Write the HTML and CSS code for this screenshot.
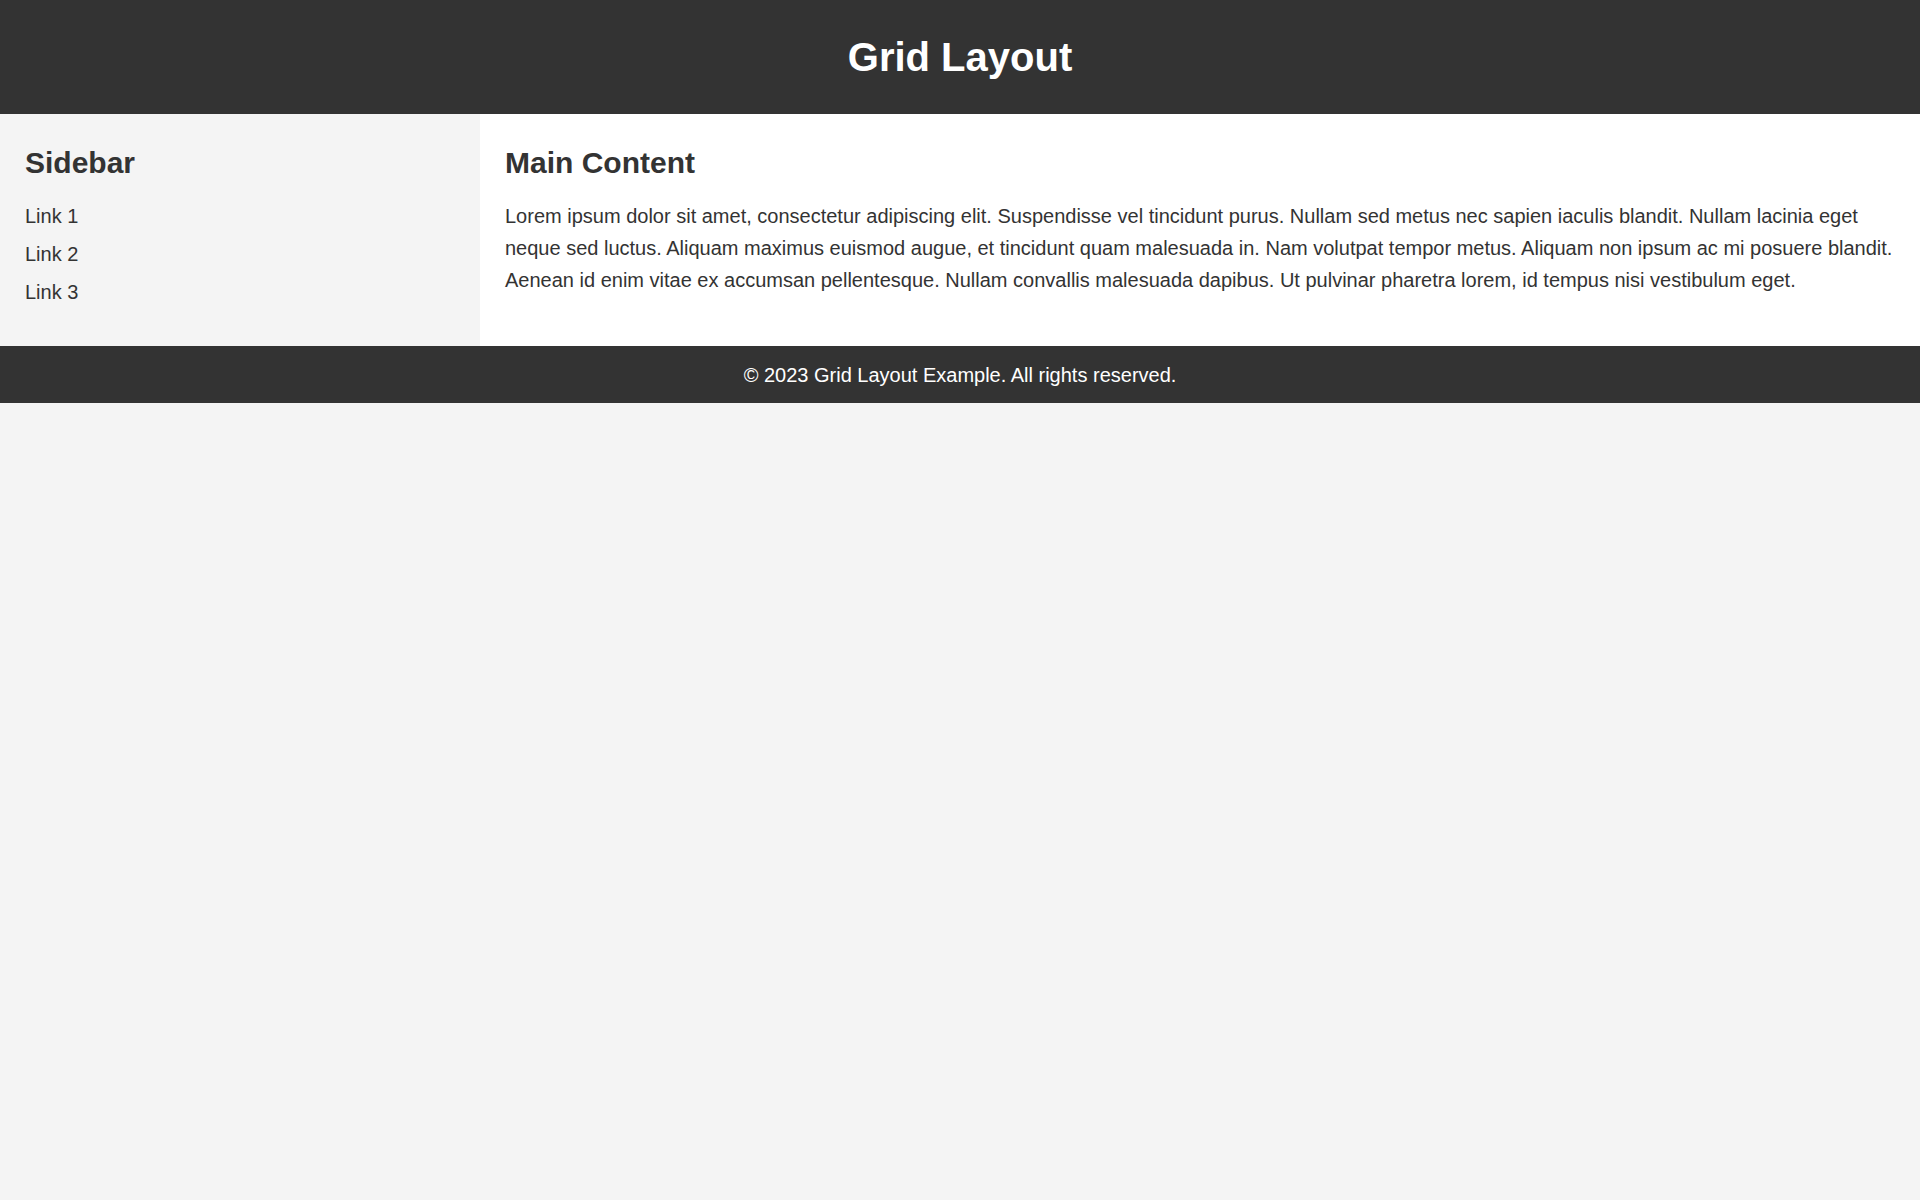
FILE: index.html
```html
<!DOCTYPE html>
<html lang="en">
<head>
<meta charset="utf-8">
<title>Grid Layout</title>
<link rel="stylesheet" href="styles.css">
</head>
<body>
<div class="page">
  <header class="site-header">
    <h1 class="site-title">Grid Layout</h1>
  </header>
  <aside class="sidebar">
    <h2 class="section-title">Sidebar</h2>
    <ul class="nav-list">
      <li class="nav-item"><a class="nav-link" href="#">Link 1</a></li>
      <li class="nav-item"><a class="nav-link" href="#">Link 2</a></li>
      <li class="nav-item"><a class="nav-link" href="#">Link 3</a></li>
    </ul>
  </aside>
  <main class="main">
    <h2 class="section-title">Main Content</h2>
    <p class="body-text">Lorem ipsum dolor sit amet, consectetur adipiscing elit. Suspendisse vel tincidunt purus. Nullam sed metus nec sapien iaculis blandit. Nullam lacinia eget neque sed luctus. Aliquam maximus euismod augue, et tincidunt quam malesuada in. Nam volutpat tempor metus. Aliquam non ipsum ac mi posuere blandit. Aenean id enim vitae ex accumsan pellentesque. Nullam convallis malesuada dapibus. Ut pulvinar pharetra lorem, id tempus nisi vestibulum eget.</p>
  </main>
  <footer class="site-footer">
    <p class="footer-text">&copy; 2023 Grid Layout Example. All rights reserved.</p>
  </footer>
</div>
</body>
</html>
```
FILE: styles.css
```css
* {
  box-sizing: border-box;
}

body {
  margin: 0;
  background: #f4f4f4;
  color: #333;
  font-family: "Liberation Sans", Arial, sans-serif;
  font-size: 20px;
  line-height: 1.6;
}

.page {
  display: grid;
  grid-template-columns: 1fr 3fr;
  grid-template-areas:
    "header header"
    "sidebar main"
    "footer footer";
}

.site-header {
  grid-area: header;
  background: #333;
  color: #fff;
  text-align: center;
  padding: 25px;
}

.site-title {
  margin: 0;
  font-size: 40px;
  font-weight: bold;
}

.sidebar {
  grid-area: sidebar;
  background: #f4f4f4;
  padding: 25px;
}

.main {
  grid-area: main;
  background: #fff;
  padding: 25px;
}

.section-title {
  margin: 0 0 13px;
  font-size: 30px;
  font-weight: bold;
}

.nav-list {
  list-style: none;
  margin: 0;
  padding: 0;
}

.nav-item {
  margin-bottom: 6px;
}

.nav-link {
  color: #333;
  text-decoration: none;
}

.body-text {
  margin: 0 0 25px;
}

.site-footer {
  grid-area: footer;
  background: #333;
  color: #fff;
  text-align: center;
  padding: 12.5px 25px;
}

.footer-text {
  margin: 0;
}
```
